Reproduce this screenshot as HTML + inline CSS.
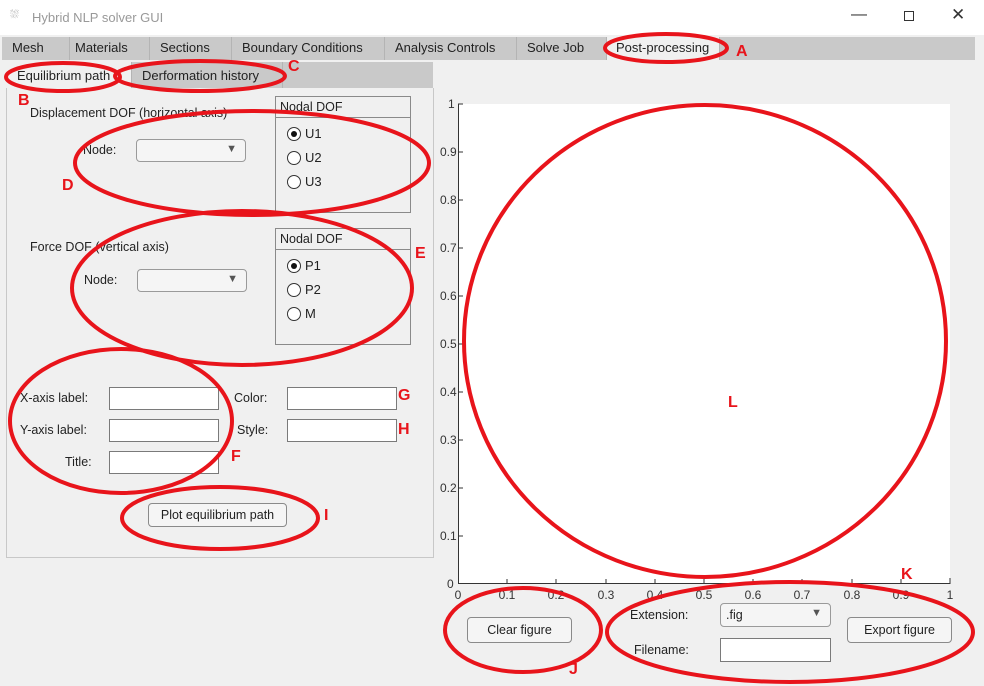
<!DOCTYPE html>
<html><head><meta charset="utf-8"><style>
*{box-sizing:border-box;margin:0;padding:0}
body{width:984px;height:686px;background:#f0f0f0;font-family:"Liberation Sans",sans-serif;font-size:12.5px;color:#222;position:relative;overflow:hidden}
.a{position:absolute}
.t{position:absolute;white-space:nowrap}
.tab{position:absolute;top:37px;height:23px;border-right:1px solid #b4b4b4;background:#c9c9c9;font-size:13px;padding:3px 0 0 10px;text-align:left;white-space:nowrap}
.box{position:absolute;background:#fff;border:1px solid #7a7a7a}
.dd{position:absolute;background:#f5f5f5;border:1px solid #9a9a9a;border-radius:4px}
.dd:after{content:"▼";position:absolute;right:8px;top:3px;font-size:11px;color:#555}
.btn{position:absolute;background:#f5f5f5;border:1px solid #8a8a8a;border-radius:4px;text-align:center;font-size:12.5px}
.rad{position:absolute;width:14px;height:14px;border:1px solid #333;border-radius:50%;background:#fff}
.rad.on:after{content:"";position:absolute;left:3px;top:3px;width:6px;height:6px;border-radius:50%;background:#111}
.grp{position:absolute;border:1px solid #8a8a8a}
.grp .h{height:21px;border-bottom:1px solid #8a8a8a;padding:3px 0 0 4px}
.yl{position:absolute;left:440px;font-size:12px;color:#333}
.xl{position:absolute;top:588px;font-size:12px;color:#333;width:30px;text-align:center}
.L{position:absolute;color:#e8141b;font-weight:bold;font-size:16px}
</style></head><body>
<div class="a" style="left:0;top:0;width:984px;height:35px;background:#fff"></div>
<div class="t" style="left:10px;top:9px;font-size:11px;color:#888">⛆</div>
<div class="t" style="left:32px;top:10px;font-size:13px;color:#999">Hybrid NLP solver GUI</div>
<div class="t" style="left:851px;top:6px;font-size:16px;color:#333">—</div>
<div class="a" style="left:904px;top:11px;width:10px;height:10px;border:1px solid #333"></div>
<div class="t" style="left:951px;top:5px;font-size:17px;color:#333">✕</div>
<div class="a" style="left:2px;top:37px;width:973px;height:23px;background:#c9c9c9"></div>
<div class="tab" style="left:2px;width:68px">Mesh</div>
<div class="tab" style="left:70px;width:80px;padding-left:5px">Materials</div>
<div class="tab" style="left:150px;width:82px">Sections</div>
<div class="tab" style="left:232px;width:153px">Boundary Conditions</div>
<div class="tab" style="left:385px;width:132px">Analysis Controls</div>
<div class="tab" style="left:517px;width:90px">Solve Job</div>
<div class="tab" style="left:607px;width:113px;background:#f0f0f0;padding-left:9px">Post-processing</div>
<div class="a" style="left:7px;top:62px;width:426px;height:26px;background:#c9c9c9"></div>
<div class="tab" style="left:7px;top:62px;height:26px;width:125px;background:#f0f0f0;padding-top:6px">Equilibrium path</div>
<div class="tab" style="left:132px;top:62px;height:26px;width:151px;padding-top:6px">Derformation history</div>
<div class="a" style="left:6px;top:88px;width:428px;height:470px;border:1px solid #c8c8c8;border-top:none"></div>

<div class="t" style="left:30px;top:106px">Displacement DOF (horizontal axis)</div>
<div class="t" style="left:83px;top:143px">Node:</div>
<div class="dd" style="left:136px;top:139px;width:110px;height:23px"></div>
<div class="grp" style="left:275px;top:96px;width:136px;height:117px"><div class="h">Nodal DOF</div></div>
<div class="rad on" style="left:287px;top:127px"></div><div class="t" style="left:305px;top:126px;font-size:13px">U1</div>
<div class="rad" style="left:287px;top:151px"></div><div class="t" style="left:305px;top:150px;font-size:13px">U2</div>
<div class="rad" style="left:287px;top:175px"></div><div class="t" style="left:305px;top:174px;font-size:13px">U3</div>

<div class="t" style="left:30px;top:240px">Force DOF (vertical axis)</div>
<div class="t" style="left:84px;top:273px">Node:</div>
<div class="dd" style="left:137px;top:269px;width:110px;height:23px"></div>
<div class="grp" style="left:275px;top:228px;width:136px;height:117px"><div class="h">Nodal DOF</div></div>
<div class="rad on" style="left:287px;top:259px"></div><div class="t" style="left:305px;top:258px;font-size:13px">P1</div>
<div class="rad" style="left:287px;top:283px"></div><div class="t" style="left:305px;top:282px;font-size:13px">P2</div>
<div class="rad" style="left:287px;top:307px"></div><div class="t" style="left:305px;top:306px;font-size:13px">M</div>

<div class="t" style="left:20px;top:391px">X-axis label:</div><div class="box" style="left:109px;top:387px;width:110px;height:23px"></div>
<div class="t" style="left:20px;top:423px">Y-axis label:</div><div class="box" style="left:109px;top:419px;width:110px;height:23px"></div>
<div class="t" style="left:65px;top:455px">Title:</div><div class="box" style="left:109px;top:451px;width:110px;height:23px"></div>
<div class="t" style="left:234px;top:391px">Color:</div><div class="box" style="left:287px;top:387px;width:110px;height:23px"></div>
<div class="t" style="left:237px;top:423px">Style:</div><div class="box" style="left:287px;top:419px;width:110px;height:23px"></div>
<div class="btn" style="left:148px;top:503px;width:139px;height:24px;padding-top:4px">Plot equilibrium path</div>

<div class="a" style="left:458px;top:104px;width:492px;height:480px;background:#fff;border-left:1px solid #333;border-bottom:1px solid #333"></div>
<svg class="a" style="left:0;top:0" width="984" height="686">
<g stroke="#333" stroke-width="1">
<line x1="458" y1="104" x2="463" y2="104"/><line x1="458" y1="152" x2="463" y2="152"/><line x1="458" y1="200" x2="463" y2="200"/><line x1="458" y1="248" x2="463" y2="248"/><line x1="458" y1="296" x2="463" y2="296"/><line x1="458" y1="344" x2="463" y2="344"/><line x1="458" y1="392" x2="463" y2="392"/><line x1="458" y1="440" x2="463" y2="440"/><line x1="458" y1="488" x2="463" y2="488"/><line x1="458" y1="536" x2="463" y2="536"/>
<line x1="507" y1="584" x2="507" y2="579"/><line x1="556" y1="584" x2="556" y2="579"/><line x1="606" y1="584" x2="606" y2="579"/><line x1="655" y1="584" x2="655" y2="579"/><line x1="704" y1="584" x2="704" y2="579"/><line x1="753" y1="584" x2="753" y2="579"/><line x1="802" y1="584" x2="802" y2="579"/><line x1="852" y1="584" x2="852" y2="579"/><line x1="901" y1="584" x2="901" y2="579"/><line x1="950" y1="584" x2="950" y2="578"/>
</g></svg>
<div class="yl" style="top:97px;left:448px">1</div>
<div class="yl" style="top:145px">0.9</div><div class="yl" style="top:193px">0.8</div><div class="yl" style="top:241px">0.7</div><div class="yl" style="top:289px">0.6</div><div class="yl" style="top:337px">0.5</div><div class="yl" style="top:385px">0.4</div><div class="yl" style="top:433px">0.3</div><div class="yl" style="top:481px">0.2</div><div class="yl" style="top:529px">0.1</div><div class="yl" style="top:577px;left:447px">0</div>
<div class="xl" style="left:443px">0</div><div class="xl" style="left:492px">0.1</div><div class="xl" style="left:541px">0.2</div><div class="xl" style="left:591px">0.3</div><div class="xl" style="left:640px">0.4</div><div class="xl" style="left:689px">0.5</div><div class="xl" style="left:738px">0.6</div><div class="xl" style="left:787px">0.7</div><div class="xl" style="left:837px">0.8</div><div class="xl" style="left:886px">0.9</div><div class="xl" style="left:935px">1</div>

<div class="btn" style="left:467px;top:617px;width:105px;height:26px;padding-top:5px">Clear figure</div>
<div class="t" style="left:630px;top:608px">Extension:</div>
<div class="dd" style="left:720px;top:603px;width:111px;height:24px;padding:4px 0 0 5px">.fig</div>
<div class="t" style="left:634px;top:643px">Filename:</div>
<div class="box" style="left:720px;top:638px;width:111px;height:24px"></div>
<div class="btn" style="left:847px;top:617px;width:105px;height:26px;padding-top:5px">Export figure</div>

<svg class="a" style="left:0;top:0" width="984" height="686" fill="none" stroke="#e8141b" stroke-width="4">
<ellipse cx="666" cy="48" rx="61" ry="14"/>
<ellipse cx="63" cy="77" rx="57" ry="14"/>
<ellipse cx="200" cy="76" rx="85" ry="15"/>
<ellipse cx="252" cy="163" rx="177" ry="52"/>
<ellipse cx="242" cy="288" rx="170" ry="77"/>
<ellipse cx="121" cy="421" rx="111" ry="72"/>
<ellipse cx="220" cy="518" rx="98" ry="31"/>
<ellipse cx="705" cy="341" rx="241" ry="236"/>
<ellipse cx="523" cy="630" rx="78" ry="42"/>
<ellipse cx="790" cy="632" rx="183" ry="50"/>
</svg>
<div class="L" style="left:736px;top:43px">A</div>
<div class="L" style="left:18px;top:92px">B</div>
<div class="L" style="left:288px;top:58px">C</div>
<div class="L" style="left:62px;top:177px">D</div>
<div class="L" style="left:415px;top:245px">E</div>
<div class="L" style="left:231px;top:448px">F</div>
<div class="L" style="left:398px;top:387px">G</div>
<div class="L" style="left:398px;top:421px">H</div>
<div class="L" style="left:324px;top:507px">I</div>
<div class="L" style="left:569px;top:661px">J</div>
<div class="L" style="left:901px;top:566px">K</div>
<div class="L" style="left:728px;top:394px">L</div>
</body></html>
